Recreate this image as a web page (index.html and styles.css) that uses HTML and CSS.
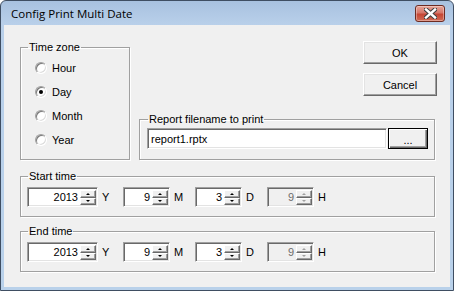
FILE: index.html
```html
<!DOCTYPE html>
<html lang="en">
  <head>
    <meta charset="UTF-8" />
    <title>Config Print Multi Date</title>
    <link rel="stylesheet" href="styles.css">
  </head>
  <body>
    <div class="window">
      <div class="titlebar">
        <span class="title">Config Print Multi Date</span>
        <button class="close" aria-label="Close">
          <svg width="13" height="11" viewBox="0 0 13 11">
            <path d="M2 1.5 L11 9.5 M11 1.5 L2 9.5" stroke="#3d3d3d" stroke-width="4.4" stroke-linecap="square" />
            <path d="M2 1.5 L11 9.5 M11 1.5 L2 9.5" stroke="#fff" stroke-width="2.4" stroke-linecap="square" />
          </svg>
        </button>
      </div>

      <div class="client">
        <div class="top">
          <fieldset class="group tz">
            <legend>Time zone</legend>
            <div class="tz-list">
              <div class="radio"><span class="mark"></span>Hour</div>
              <div class="radio"><span class="mark checked"></span>Day</div>
              <div class="radio"><span class="mark"></span>Month</div>
              <div class="radio"><span class="mark"></span>Year</div>
            </div>
          </fieldset>

          <div class="side">
            <div class="actions">
              <button class="btn">OK</button>
              <button class="btn">Cancel</button>
            </div>
            <fieldset class="group report">
              <legend>Report filename to print</legend>
              <div class="file-row">
                <div class="edit file">report1.rptx</div>
                <button class="btn browse">...</button>
              </div>
            </fieldset>
          </div>
        </div>

        <fieldset class="group time">
          <legend>Start time</legend>
          <div class="spin-row">
            <div class="spin-item">
              <div class="spin wide"><span class="val">2013</span><span class="arrows"><span class="up"></span><span class="down"></span></span></div>
              <span class="unit">Y</span>
            </div>
            <div class="spin-item">
              <div class="spin"><span class="val">9</span><span class="arrows"><span class="up"></span><span class="down"></span></span></div>
              <span class="unit">M</span>
            </div>
            <div class="spin-item">
              <div class="spin"><span class="val">3</span><span class="arrows"><span class="up"></span><span class="down"></span></span></div>
              <span class="unit">D</span>
            </div>
            <div class="spin-item">
              <div class="spin disabled"><span class="val">9</span><span class="arrows"><span class="up"></span><span class="down"></span></span></div>
              <span class="unit">H</span>
            </div>
          </div>
        </fieldset>

        <fieldset class="group time end">
          <legend>End time</legend>
          <div class="spin-row">
            <div class="spin-item">
              <div class="spin wide"><span class="val">2013</span><span class="arrows"><span class="up"></span><span class="down"></span></span></div>
              <span class="unit">Y</span>
            </div>
            <div class="spin-item">
              <div class="spin"><span class="val">9</span><span class="arrows"><span class="up"></span><span class="down"></span></span></div>
              <span class="unit">M</span>
            </div>
            <div class="spin-item">
              <div class="spin"><span class="val">3</span><span class="arrows"><span class="up"></span><span class="down"></span></span></div>
              <span class="unit">D</span>
            </div>
            <div class="spin-item">
              <div class="spin disabled"><span class="val">9</span><span class="arrows"><span class="up"></span><span class="down"></span></span></div>
              <span class="unit">H</span>
            </div>
          </div>
        </fieldset>
      </div>
    </div>
  </body>
</html>
```

FILE: styles.css
```css
* {
  box-sizing: border-box;
}
body {
  margin: 0;
  font-family: 'Liberation Sans', Arial, sans-serif;
  font-size: 11px;
  color: #000;
  background: #fff;
}
.window {
  width: 454px;
  height: 291px;
  border: 1px solid #3f4e62;
  border-radius: 6px 6px 0 0;
  background: linear-gradient(#a8c1df, #b9d0ea 24px, #b9d1ea);
  padding: 0 3px 3px;
  display: flex;
  flex-direction: column;
}
.titlebar {
  height: 24px;
  display: flex;
  align-items: center;
  justify-content: space-between;
  padding: 1px 5px 0 7px;
}
.title {
  font-family: 'Open Sans', 'Noto Sans', sans-serif;
  font-size: 11.5px;
  color: #000;
}
.close {
  width: 30px;
  height: 17px;
  padding: 0;
  border: 1px solid #6d2b22;
  border-radius: 3px;
  background: linear-gradient(#e7a497, #d5776a 45%, #c54634 55%, #d06b55);
  box-shadow: inset 0 0 0 1px rgba(255, 255, 255, 0.35);
  display: flex;
  align-items: center;
  justify-content: center;
}
.client {
  flex: 1;
  background: #f0f0f0;
  padding: 16px 0 0 16px;
}
.top {
  display: flex;
  gap: 9px;
}
.group {
  margin: 0;
  padding: 0;
  border: 1px solid #a0a0a0;
  box-shadow: inset 1px 1px #fff, 1px 1px #fff;
}
.group legend {
  margin-left: 7px;
  padding: 0 1px;
  line-height: 13px;
}
.tz {
  width: 110px;
}
.tz-list {
  padding: 2px 0 7px 14px;
}
.radio {
  height: 24px;
  display: flex;
  align-items: center;
  gap: 5px;
}
.mark {
  width: 12px;
  height: 12px;
  border-radius: 50%;
  background: #fff;
  border: 1px solid;
  border-color: #a0a0a0 #fff #fff #a0a0a0;
  box-shadow: inset 1px 1px #7a7a7a, inset -1px -1px #dcdcdc;
  display: flex;
  align-items: center;
  justify-content: center;
}
.mark.checked::after {
  content: "";
  width: 4px;
  height: 4px;
  border-radius: 50%;
  background: #000;
}
.side {
  width: 298px;
  display: flex;
  flex-direction: column;
  justify-content: space-between;
}
.actions {
  align-self: flex-end;
  display: flex;
  flex-direction: column;
  gap: 9px;
}
.btn {
  font: inherit;
  color: #000;
  background: #f0f0f0;
  padding: 0;
  border: 1px solid;
  border-color: #fff #696969 #696969 #fff;
  box-shadow: inset -1px -1px #a0a0a0, inset 1px 1px #e3e3e3;
}
.actions .btn {
  width: 74px;
  height: 23px;
}
.report {
  width: 296px;
}
.report legend {
  margin-left: 8px;
}
.file-row {
  display: flex;
  gap: 1px;
  padding: 2px 0 10px 7px;
}
.edit {
  background: #fff;
  border: 1px solid;
  border-color: #a0a0a0 #fff #fff #a0a0a0;
  box-shadow: inset 1px 1px #696969, inset -1px -1px #e3e3e3;
}
.file {
  width: 240px;
  height: 21px;
  padding: 0 3px;
  display: flex;
  align-items: center;
}
.btn.browse {
  width: 40px;
  height: 21px;
  border: 1px solid #000;
  box-shadow: inset 1px 1px #fff, inset -1px -1px #696969, inset -2px -2px #a0a0a0;
  padding-top: 2px;
}
.time {
  width: 415px;
  margin-top: 10px;
}
.time.end {
  margin-top: 8px;
}
.spin-row {
  display: flex;
  padding: 4px 0 9px 6px;
}
.spin-item {
  display: flex;
  align-items: center;
}
.unit {
  width: 25px;
  padding-left: 4px;
}
.spin {
  width: 47px;
  height: 20px;
  display: flex;
  background: #fff;
  border: 1px solid;
  border-color: #a0a0a0 #fff #fff #a0a0a0;
  box-shadow: inset 1px 1px #696969, inset -1px -1px #e3e3e3;
  padding: 2px 1px 1px 2px;
}
.spin.wide {
  width: 71px;
}
.val {
  flex: 1;
  text-align: right;
  padding-right: 2px;
  line-height: 15px;
}
.arrows {
  width: 16px;
  display: flex;
  flex-direction: column;
}
.arrows span {
  flex: 1;
  background: #f0f0f0;
  border: 1px solid;
  border-color: #fff #696969 #696969 #fff;
  box-shadow: inset -1px -1px #a0a0a0;
  display: flex;
  align-items: center;
  justify-content: center;
}
.arrows span::after {
  content: "";
  border-left: 2px solid transparent;
  border-right: 2px solid transparent;
}
.arrows .up::after {
  border-bottom: 2px solid #000;
}
.arrows .down::after {
  border-top: 2px solid #000;
}
.spin.disabled {
  background: #f0f0f0;
  color: #6d6d6d;
}
.spin.disabled .up::after {
  border-bottom-color: #a0a0a0;
}
.spin.disabled .down::after {
  border-top-color: #a0a0a0;
}
```
